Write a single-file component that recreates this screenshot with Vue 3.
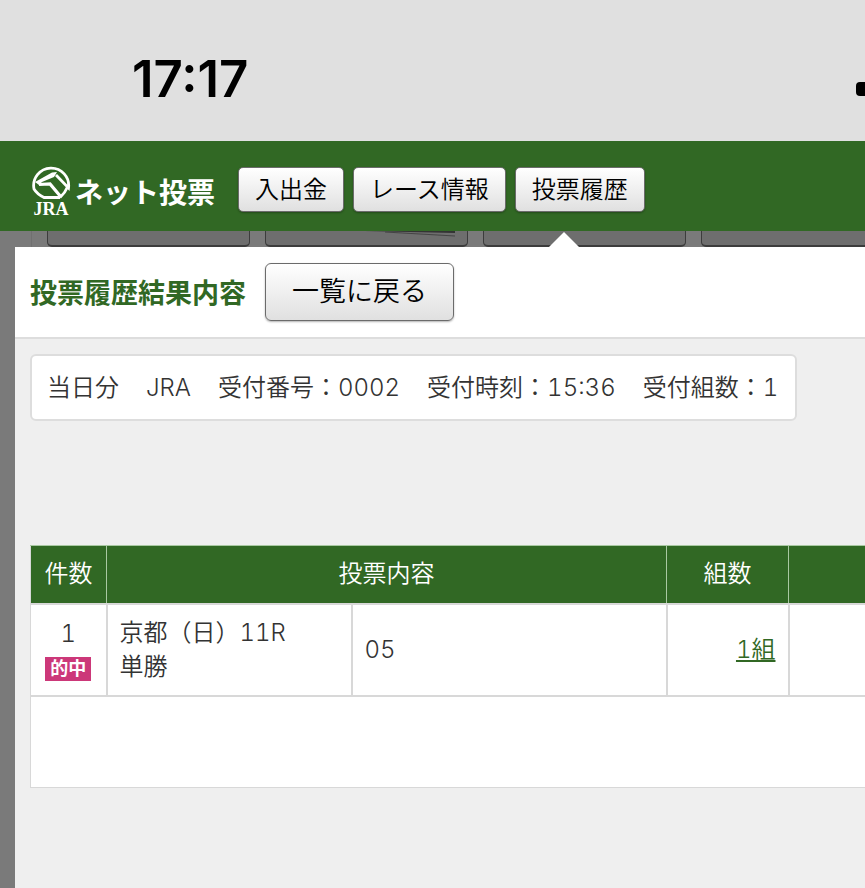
<template>
  <div class="screen">
    <div class="status-bar">
      <span class="clock">17:17</span>
      <span class="signal"></span>
    </div>

    <header class="site-header">
      <a class="brand" href="#" aria-label="JRA ネット投票">
        <svg class="brand-mark" viewBox="0 0 40 56" aria-hidden="true">
          <g fill="none" stroke="currentColor" stroke-width="2.8">
            <path d="M25 10 L37.500 23 A17.500 17.500 0 1 0 3 24 Q6 29 13 32.500 H29" />
            <path d="M8 19.500 L19 19 L30 32" stroke-width="3.2" />
            <path d="M36.500 22 Q34 28 29 32.500" />
          </g>
          <path d="M4 17 L21 7.500 L26 7 L23 12 L11 17 L8 20 Z" fill="currentColor" />
          <text x="20" y="50" text-anchor="middle">JRA</text>
        </svg>
        <span class="brand-name">ネット投票</span>
      </a>
      <nav class="menu">
        <button v-for="item in menu" :key="item" class="btn" type="button">{{ item }}</button>
      </nav>
    </header>

    <main class="backdrop">
      <div class="behind">
        <div class="behind-inner">
          <div v-for="n in 4" :key="n" class="behind-card">
            <svg v-if="n === 2" class="behind-line" viewBox="0 0 90 8" aria-hidden="true">
              <path d="M0 0 H90 V2 Z" fill="#333" />
              <path d="M20 1 L90 5" stroke="#444" fill="none" />
            </svg>
          </div>
        </div>
      </div>

      <section class="panel">
        <div class="panel-head">
          <h1>投票履歴結果内容</h1>
          <button class="btn btn-large" type="button">一覧に戻る</button>
        </div>

        <div class="panel-body">
          <ul class="summary">
            <li v-for="item in summary" :key="item">{{ item }}</li>
          </ul>

          <table class="bets">
            <colgroup>
              <col class="col-no" />
              <col class="col-race" />
              <col class="col-pick" />
              <col class="col-count" />
              <col />
            </colgroup>
            <thead>
              <tr>
                <th>件数</th>
                <th colspan="2">投票内容</th>
                <th>組数</th>
                <th></th>
              </tr>
            </thead>
            <tbody>
              <tr v-for="bet in bets" :key="bet.no">
                <td class="no">
                  {{ bet.no }}
                  <span v-if="bet.hit" class="hit">的中</span>
                </td>
                <td>{{ bet.race }}<br />{{ bet.type }}</td>
                <td>{{ bet.pick }}</td>
                <td class="count"><a href="#">{{ bet.count }}組</a></td>
                <td></td>
              </tr>
              <tr class="blank">
                <td colspan="5"></td>
              </tr>
            </tbody>
          </table>
        </div>
      </section>
    </main>
  </div>
</template>

<script setup>
const menu = ["入出金", "レース情報", "投票履歴"];

const summary = ["当日分", "JRA", "受付番号：0002", "受付時刻：15:36", "受付組数：1"];

const bets = [
  { no: 1, hit: true, race: "京都（日）11R", type: "単勝", pick: "05", count: 1 },
];
</script>

<style>
body {
  margin: 0;
  background: #efefef;
}
</style>

<style scoped>
.screen {
  display: flex;
  flex-direction: column;
  min-height: 100vh;
  overflow: hidden;
  font-family: Inter, "Noto Sans CJK JP", sans-serif;
  font-size: 24px;
  font-weight: 300;
  font-variant-numeric: tabular-nums;
  line-height: 34px;
  color: #333;
}

.status-bar {
  display: flex;
  align-items: center;
  justify-content: space-between;
  box-sizing: border-box;
  height: 141px;
  padding: 16px 0 0 132px;
  background: #e0e0e0;
}

.clock {
  font-size: 51px;
  font-weight: 600;
  font-variant-numeric: normal;
  line-height: 60px;
  color: #000;
}

.signal {
  width: 9px;
  height: 14px;
  margin-top: 20px;
  border-radius: 4px 0 0 4px;
  background: #000;
}

.site-header {
  display: flex;
  align-items: center;
  box-sizing: border-box;
  height: 90px;
  padding: 6px 31px 0;
  background: #316824;
}

.brand {
  display: flex;
  align-items: center;
  gap: 4px;
  margin: 8px 23px 0 0;
  color: #fff;
  text-decoration: none;
}

.brand-mark {
  width: 40px;
  height: 56px;
}

.brand-mark text {
  font-family: "Liberation Serif", serif;
  font-size: 18px;
  font-weight: 700;
  fill: currentColor;
}

.brand-name {
  font-size: 28px;
  font-weight: 700;
  line-height: 40px;
  white-space: nowrap;
}

.menu {
  display: flex;
  gap: 9px;
}

.btn {
  height: 45px;
  padding: 2px 16px 0;
  border: 1px solid #6b6b6b;
  border-radius: 5px;
  background: linear-gradient(#fff, #e0e0e0);
  box-shadow: 0 1px 2px rgba(0, 0, 0, 0.3);
  color: #000;
  font: inherit;
  font-weight: 350;
  white-space: nowrap;
}

.btn-large {
  height: 58px;
  padding: 0 26px;
  border-radius: 6px;
  font-size: 27px;
}

.backdrop {
  display: flex;
  flex: 1;
  flex-direction: column;
  padding-left: 15px;
  background: #7a7a7a;
}

.behind {
  height: 16px;
  padding-left: 16px;
  overflow: hidden;
}

.behind-inner {
  display: flex;
  gap: 15px;
  height: 16px;
  padding-left: 15px;
  border-left: 1px solid #707070;
}

.behind-card {
  display: flex;
  flex: none;
  justify-content: flex-end;
  box-sizing: border-box;
  width: 203px;
  height: 16px;
  padding-right: 12px;
  border: 1px solid #3c3c3c;
  border-width: 0 1px 2px;
  border-radius: 0 0 5px 5px;
  background: #6e6e6e;
}

.behind-line {
  width: 90px;
  height: 8px;
}

.panel {
  position: relative;
  flex: 1;
  background: #efefef;
}

/* pointer up to the active menu entry */
.panel::before {
  content: "";
  position: absolute;
  top: -15px;
  left: 534px;
  border: 15px solid transparent;
  border-top: 0;
  border-bottom-color: #fff;
}

.panel-head {
  display: flex;
  align-items: center;
  gap: 19px;
  box-sizing: border-box;
  height: 92px;
  padding-left: 15px;
  border-bottom: 2px solid #ddd;
  background: #fff;
}

h1 {
  margin: 0;
  padding-top: 4px;
  font-size: 27px;
  font-weight: 700;
  color: #316824;
  white-space: nowrap;
}

.panel-body {
  padding: 15px 0 0 15px;
}

.summary {
  display: flex;
  gap: 27px;
  box-sizing: border-box;
  width: fit-content;
  margin: 0 0 124px;
  padding: 15px 17px 14px 15px;
  border: 2px solid #ddd;
  border-radius: 6px;
  background: #fff;
  list-style: none;
  white-space: nowrap;
  font-weight: 350;
}

.bets {
  width: 100%;
  table-layout: fixed;
  border-collapse: collapse;
  background: #fff;
  font-weight: 350;
}

.col-no {
  width: 76px;
}

.col-race {
  width: 245px;
}

.col-pick {
  width: 315px;
}

.col-count {
  width: 122px;
}

th,
td {
  box-sizing: border-box;
  padding: 11px 12px;
  border: 2px solid #d8d8d8;
  text-align: left;
}

th {
  height: 58px;
  border: 1px solid #a9c9a2;
  background: #316824;
  color: #fff;
  font-weight: 350;
  text-align: center;
}

td {
  height: 92px;
}

th:first-child,
td:first-child {
  border-left: 1px solid #d8d8d8;
}

th:last-child,
td:last-child {
  border-right: 0;
}

.blank td {
  border-bottom-width: 1px;
}

td.no {
  padding: 0 0 2px;
  text-align: center;
}

.hit {
  display: block;
  width: 46px;
  margin: 6px auto 0;
  background: #cc3879;
  color: #fff;
  font-size: 18px;
  font-weight: 700;
  line-height: 24px;
}

td.count {
  text-align: right;
}

.count a {
  color: #316824;
}
</style>
